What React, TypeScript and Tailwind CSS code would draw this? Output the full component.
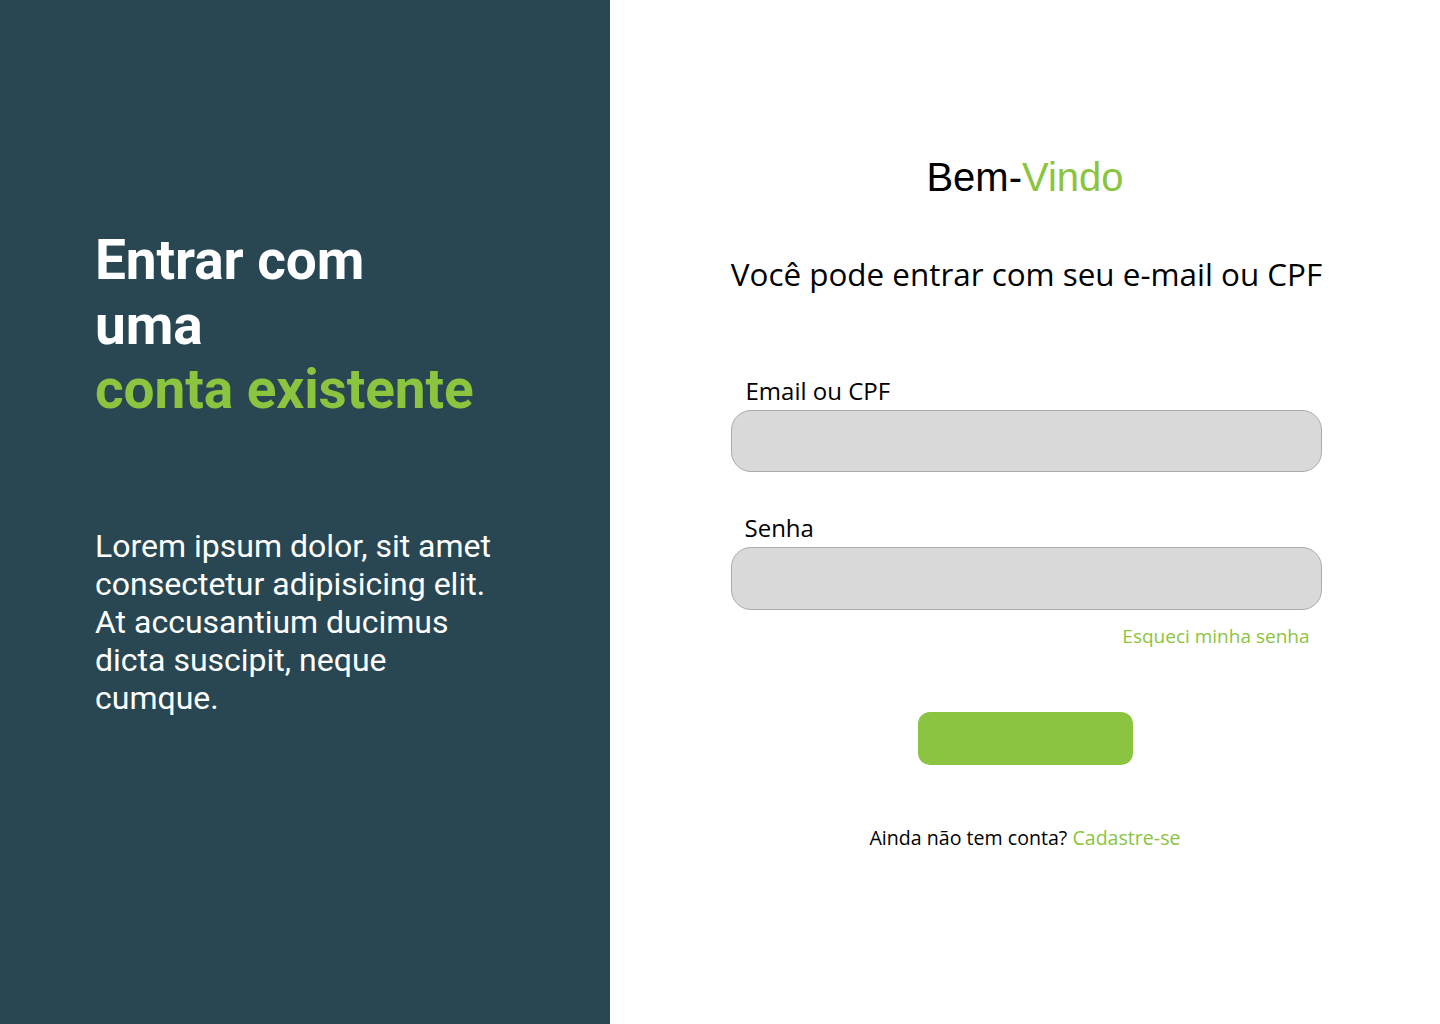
import React from 'react';

const roboto = { fontFamily: 'Roboto, "Liberation Sans", sans-serif' };

export default function App() {
  return (
    <div className="flex w-full h-[1024px] bg-white">
      {/* left panel */}
      <aside
        className="w-[610px] shrink-0 h-full bg-[#284752] text-white pl-[95px] pt-[228px]"
        style={roboto}
      >
        <h1 className="text-[55px] leading-[64.5px] font-bold tracking-[-0.1px]">
          Entrar com
          <br />
          uma
          <br />
          <span className="text-[#8bc43f]">conta existente</span>
        </h1>
        <p className="mt-[105px] text-[32px] leading-[38px] w-[402px]">
          Lorem ipsum dolor, sit amet consectetur adipisicing elit. At accusantium ducimus dicta suscipit, neque cumque.
        </p>
      </aside>

      {/* right panel */}
      <main
        className="flex-1 flex flex-col items-center pt-[152px] text-black"
        style={{ fontFamily: '"Open Sans", "Noto Sans", sans-serif' }}
      >
        <h2 className="text-[40px] leading-[50px]" style={{ fontFamily: '"Liberation Sans", Arial, sans-serif' }}>
          Bem-<span className="text-[#8bc43f]">Vindo</span>
        </h2>
        <p className="mt-[52px] ml-[3px] text-[31.4px] leading-[40px] whitespace-nowrap">Você pode entrar com seu e-mail ou CPF</p>

        <form className="w-[591px] ml-[2px] mt-[82px] flex flex-col" onSubmit={(e) => e.preventDefault()}>
          <label className="pl-[15px] text-[24px] leading-[30px]">Email ou CPF</label>
          <input
            className="mt-[4px] h-[62px] w-full rounded-[20px] bg-[#d9d9d9] border border-[#ababab] outline-none px-5"
            type="text"
          />

          <label className="mt-[41px] pl-[14px] text-[24px] leading-[30px]">Senha</label>
          <input
            className="mt-[4px] h-[63px] w-full rounded-[20px] bg-[#d9d9d9] border border-[#ababab] outline-none px-5"
            type="password"
          />

          <a href="#" className="self-end mr-[12px] mt-[14px] text-[19px] leading-[24px] text-[#8bc43f]">
            Esqueci minha senha
          </a>

          <button
            type="submit"
            className="self-center mt-[64px] mr-[2px] w-[215px] h-[53px] rounded-[12px] bg-[#8bc441]"
          />
        </form>

        <p className="mt-[60px] text-[19.6px] leading-[26px]">
          Ainda não tem conta? <a href="#" className="text-[#8bc43f]">Cadastre-se</a>
        </p>
      </main>
    </div>
  );
}
